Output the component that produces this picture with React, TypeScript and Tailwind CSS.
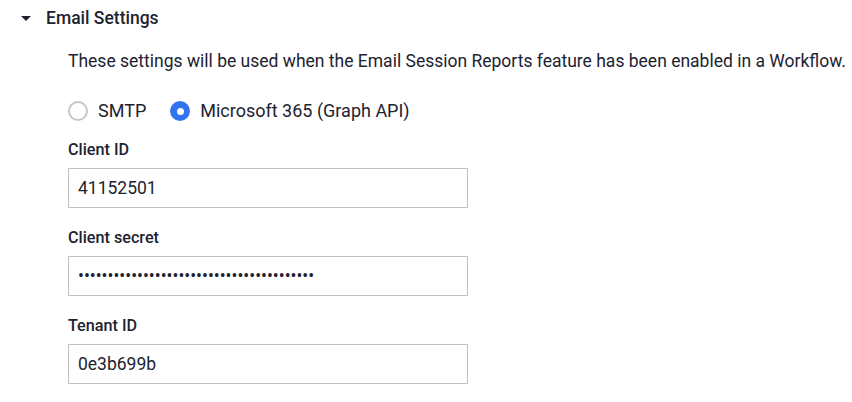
import React from "react";

const font = { fontFamily: "Roboto, 'Noto Sans', sans-serif" };

function Radio({ label, checked }: { label: string; checked?: boolean }) {
  return (
    <label className="flex items-center gap-[10px]">
      {checked ? (
        <span className="flex h-5 w-5 items-center justify-center rounded-full bg-[#3273ee]">
          <span className="h-[7px] w-[7px] rounded-full bg-white" />
        </span>
      ) : (
        <span className="h-5 w-5 rounded-full border-2 border-[#c7c7c7] bg-white" />
      )}
      <span className="text-[18px] leading-6 text-[#1d2330]">{label}</span>
    </label>
  );
}

function Field({ label, value, secret }: { label: string; value: string; secret?: boolean }) {
  return (
    <div className="flex flex-col">
      <div className="h-5 text-[16.2px] font-medium leading-5 text-[#1d2330]">{label}</div>
      <input
        readOnly
        type={secret ? "password" : "text"}
        value={value}
        className="mt-2 h-10 w-[400px] border border-[#bfbfbf] bg-white px-[9px] text-[17.5px] text-[#1d2330] outline-none"
        style={font}
      />
    </div>
  );
}

export default function App() {
  return (
    <div className="min-h-[402px] w-[852px] bg-white pt-[6px]" style={font}>
      {/* Section header */}
      <div className="flex h-6 items-center pl-[21px]">
        <svg width="10" height="5" viewBox="0 0 10 5" className="shrink-0">
          <path d="M0 0h10L5 5z" fill="#1d2330" />
        </svg>
        <span className="ml-[15px] text-[17.5px] font-medium text-[#1d2330]">Email Settings</span>
      </div>

      <div className="pl-[68px]">
        <p className="mt-[19px] text-[17.5px] leading-6 text-[#1d2330]">
          These settings will be used when the Email Session Reports feature has been enabled in a Workflow.
        </p>

        <div className="mt-[26px] flex h-6 items-center gap-[24px]">
          <Radio label="SMTP" />
          <Radio label="Microsoft 365 (Graph API)" checked />
        </div>

        <div className="mt-[17px] flex flex-col gap-5">
          <Field label="Client ID" value="41152501" />
          <Field label="Client secret" value="abcdefghijklmnopqrstuvwxyzabcdefghijklmn" secret />
          <Field label="Tenant ID" value="0e3b699b" />
        </div>
      </div>
    </div>
  );
}
